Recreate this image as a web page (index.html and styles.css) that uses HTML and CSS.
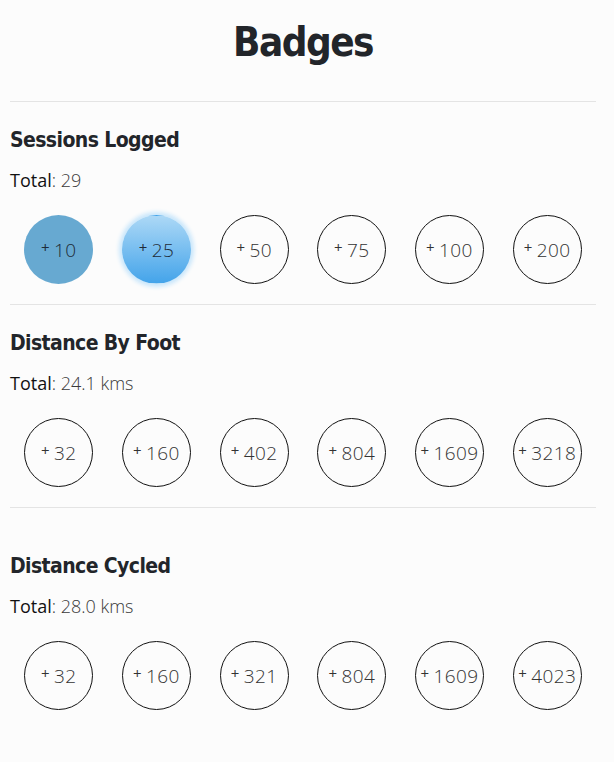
FILE: index.html
```html
<!DOCTYPE html>
<html>
<head>
<meta charset="utf-8">
<link rel="stylesheet" href="styles.css">
</head>
<body>
<div class="page">
  <h1 class="title">Badges</h1>
  <hr class="rule">
  <section class="group">
    <h2 class="group-title">Sessions Logged</h2>
    <p class="total"><span class="label">Total</span>: 29</p>
    <div class="badges">
      <div class="cell"><div class="badge earned"><span class="plus">+</span> 10</div></div>
      <div class="cell"><div class="badge next"><span class="plus">+</span> 25</div></div>
      <div class="cell"><div class="badge"><span class="plus">+</span> 50</div></div>
      <div class="cell"><div class="badge"><span class="plus">+</span> 75</div></div>
      <div class="cell"><div class="badge"><span class="plus">+</span> 100</div></div>
      <div class="cell"><div class="badge"><span class="plus">+</span> 200</div></div>
    </div>
  </section>
  <hr class="rule">
  <section class="group">
    <h2 class="group-title">Distance By Foot</h2>
    <p class="total"><span class="label">Total</span>: 24.1 kms</p>
    <div class="badges">
      <div class="cell"><div class="badge"><span class="plus">+</span> 32</div></div>
      <div class="cell"><div class="badge"><span class="plus">+</span> 160</div></div>
      <div class="cell"><div class="badge"><span class="plus">+</span> 402</div></div>
      <div class="cell"><div class="badge"><span class="plus">+</span> 804</div></div>
      <div class="cell"><div class="badge"><span class="plus">+</span> 1609</div></div>
      <div class="cell"><div class="badge"><span class="plus">+</span> 3218</div></div>
    </div>
  </section>
  <hr class="rule">
  <section class="group group-spaced">
    <h2 class="group-title">Distance Cycled</h2>
    <p class="total"><span class="label">Total</span>: 28.0 kms</p>
    <div class="badges">
      <div class="cell"><div class="badge"><span class="plus">+</span> 32</div></div>
      <div class="cell"><div class="badge"><span class="plus">+</span> 160</div></div>
      <div class="cell"><div class="badge"><span class="plus">+</span> 321</div></div>
      <div class="cell"><div class="badge"><span class="plus">+</span> 804</div></div>
      <div class="cell"><div class="badge"><span class="plus">+</span> 1609</div></div>
      <div class="cell"><div class="badge"><span class="plus">+</span> 4023</div></div>
    </div>
  </section>
</div>
</body>
</html>
```

FILE: styles.css
```css
html, body {
  margin: 0;
  padding: 0;
  background: #fcfcfc;
}
body {
  font-family: "Open Sans", "Lato", sans-serif;
  color: #222;
}
.page {
  margin: 0 18px 0 10px;
  padding-top: 12px;
}
.title {
  margin: 0;
  text-align: center;
  font-family: "DejaVu Sans Condensed", "DejaVu Sans", sans-serif;
  font-stretch: condensed;
  font-weight: 700;
  font-size: 40px;
  letter-spacing: -1.5px;
  line-height: 60px;
  color: #22252a;
}
.rule {
  margin: 29px 0 0;
  border: 0;
  border-top: 1px solid #e4e4e4;
  height: 0;
}
.group {
  padding-bottom: 20px;
}
.group + .rule {
  margin-top: 0;
}
.group-title {
  margin: 25px 0 0;
  font-family: "DejaVu Sans Condensed", "DejaVu Sans", sans-serif;
  font-stretch: condensed;
  font-weight: 700;
  font-size: 21px;
  letter-spacing: -0.6px;
  line-height: 26px;
  color: #22252a;
}
.group-spaced .group-title {
  margin-top: 45px;
}
.total {
  margin: 15px 0 0;
  font-size: 18px;
  line-height: 24px;
  font-weight: 300;
  color: #3a3a3a;
}
.label {
  font-weight: 400;
  color: #111;
}
.badges {
  margin-top: 23px;
  display: grid;
  grid-template-columns: repeat(6, 1fr);
}
.cell {
  display: flex;
  justify-content: center;
}
.badge {
  width: 67px;
  height: 67px;
  border: 1px solid #111;
  border-radius: 50%;
  display: flex;
  align-items: center;
  justify-content: center;
  font-size: 19px;
  letter-spacing: 0.4px;
  font-weight: 300;
  color: #333;
  white-space: nowrap;
}
.plus {
  font-size: 15px;
  font-weight: 400;
  position: relative;
  top: -3px;
  margin-right: 4px;
}
.earned {
  border-color: transparent;
  background: #67a9d1;
  color: #1e2b38;
}
.next {
  border-color: transparent;
  background: linear-gradient(#acd8f6, #44a4ea);
  box-shadow: 0 0 4px 3px #c8e6fb;
  color: #1e2b38;
}
```
